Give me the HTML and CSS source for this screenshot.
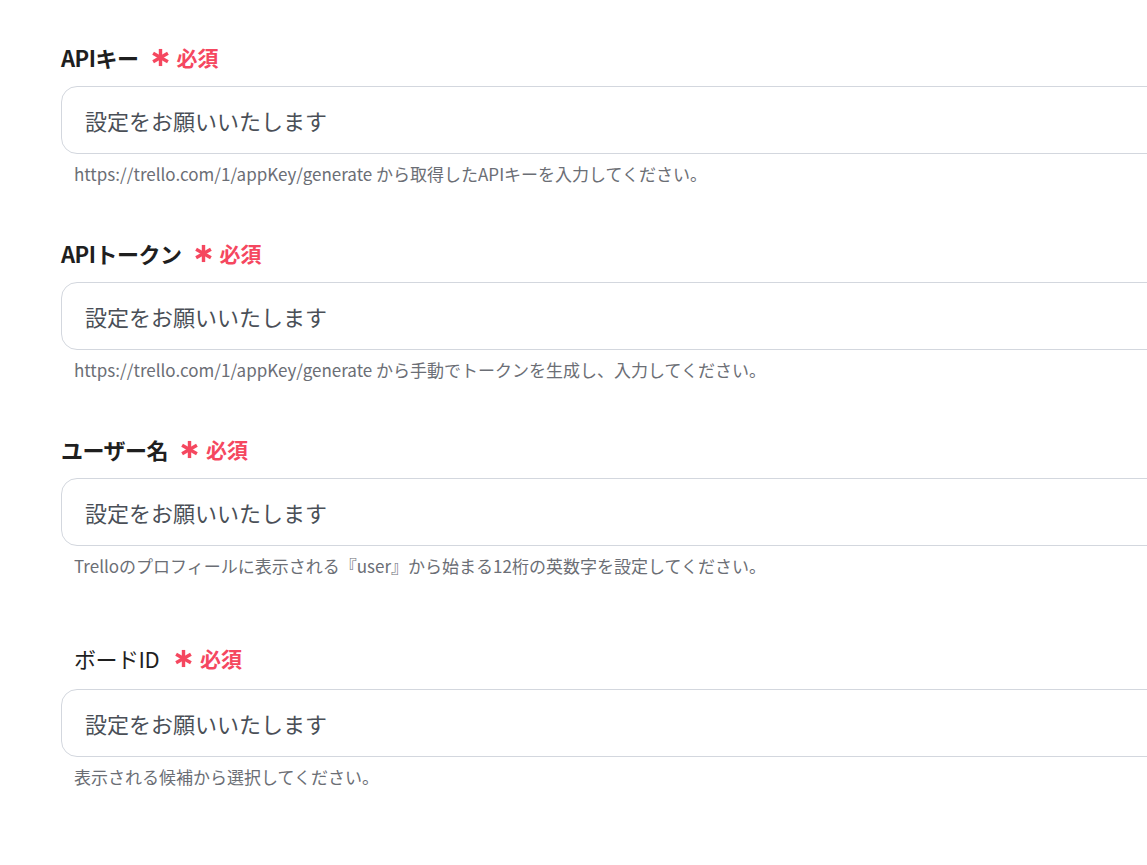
FILE: index.html
```html
<!DOCTYPE html>
<html lang="ja">
<head>
  <meta charset="UTF-8">
  <meta name="viewport" content="width=device-width, initial-scale=1.0">
  <title>Trello 連携設定</title>
  <link rel="stylesheet" href="styles.css">
</head>
<body>
<div class="form">

  <!-- APIキー -->
  <div class="field">
    <div class="label">APIキー
      <span class="req"><svg class="mark" viewBox="0 0 20 20"><g stroke="currentColor" stroke-width="3.6" stroke-linecap="butt"><line x1="10" y1="1" x2="10" y2="19"/><line x1="2.2" y1="5.5" x2="17.8" y2="14.5"/><line x1="2.2" y1="14.5" x2="17.8" y2="5.5"/></g></svg>必須</span>
    </div>
    <input class="input" type="text" placeholder="設定をお願いいたします">
    <div class="help">https://trello.com/1/appKey/generate から取得したAPIキーを入力してください。</div>
  </div>

  <!-- APIトークン -->
  <div class="field">
    <div class="label">APIトークン
      <span class="req"><svg class="mark" viewBox="0 0 20 20"><g stroke="currentColor" stroke-width="3.6" stroke-linecap="butt"><line x1="10" y1="1" x2="10" y2="19"/><line x1="2.2" y1="5.5" x2="17.8" y2="14.5"/><line x1="2.2" y1="14.5" x2="17.8" y2="5.5"/></g></svg>必須</span>
    </div>
    <input class="input" type="text" placeholder="設定をお願いいたします">
    <div class="help">https://trello.com/1/appKey/generate から手動でトークンを生成し、入力してください。</div>
  </div>

  <!-- ユーザー名 -->
  <div class="field">
    <div class="label">ユーザー名
      <span class="req"><svg class="mark" viewBox="0 0 20 20"><g stroke="currentColor" stroke-width="3.6" stroke-linecap="butt"><line x1="10" y1="1" x2="10" y2="19"/><line x1="2.2" y1="5.5" x2="17.8" y2="14.5"/><line x1="2.2" y1="14.5" x2="17.8" y2="5.5"/></g></svg>必須</span>
    </div>
    <input class="input" type="text" placeholder="設定をお願いいたします">
    <div class="help">Trelloのプロフィールに表示される『user』から始まる12桁の英数字を設定してください。</div>
  </div>

  <!-- ボードID (select) -->
  <div class="field field-select">
    <div class="label label-plain">ボードID
      <span class="req"><svg class="mark" viewBox="0 0 20 20"><g stroke="currentColor" stroke-width="3.6" stroke-linecap="butt"><line x1="10" y1="1" x2="10" y2="19"/><line x1="2.2" y1="5.5" x2="17.8" y2="14.5"/><line x1="2.2" y1="14.5" x2="17.8" y2="5.5"/></g></svg>必須</span>
    </div>
    <input class="input" type="text" placeholder="設定をお願いいたします">
    <div class="help">表示される候補から選択してください。</div>
  </div>

</div>
</body>
</html>
```

FILE: styles.css
```css
html, body {
  margin: 0;
  overflow: hidden;
}
body {
  background: #fff;
  font-family: "Noto Sans CJK JP", "Noto Sans", sans-serif;
  color: #1f1f1f;
}
.form {
  display: flex;
  flex-direction: column;
  gap: 52px;
  padding: 42px 0 0 61px;
}
.field {
  display: flex;
  flex-direction: column;
}
.label {
  display: flex;
  align-items: center;
  font-size: 22px;
  font-weight: 700;
  line-height: 30px;
  margin-bottom: 14px;
  letter-spacing: -0.5px;
}
.req {
  display: inline-flex;
  align-items: center;
  color: #f5475f;
  margin-left: 12px;
  font-size: 21px;
  letter-spacing: 0;
}
.mark {
  width: 19px;
  height: 19px;
  margin-right: 7px;
}

.input {
  box-sizing: border-box;
  width: 1160px;
  height: 68px;
  padding: 0 23px;
  border: 1px solid #d3d7de;
  border-radius: 16px;
  font-family: inherit;
  font-size: 22px;
  color: #4a4f57;
  background: #fff;
  outline: none;
}
.input::placeholder {
  color: #4a4f57;
}

.help {
  margin-top: 8px;
  padding-left: 13px;
  font-size: 17px;
  line-height: 24px;
  color: #6b6e75;
}

/* last field is the board picker, drawn a bit differently */
.field-select {
  margin-top: 13px;
}
.label-plain {
  font-weight: 400;
  padding-left: 13px;
  margin-bottom: 16px;
}
.label-plain .req {
  font-weight: 700;
  margin-left: 15px;
}
```
